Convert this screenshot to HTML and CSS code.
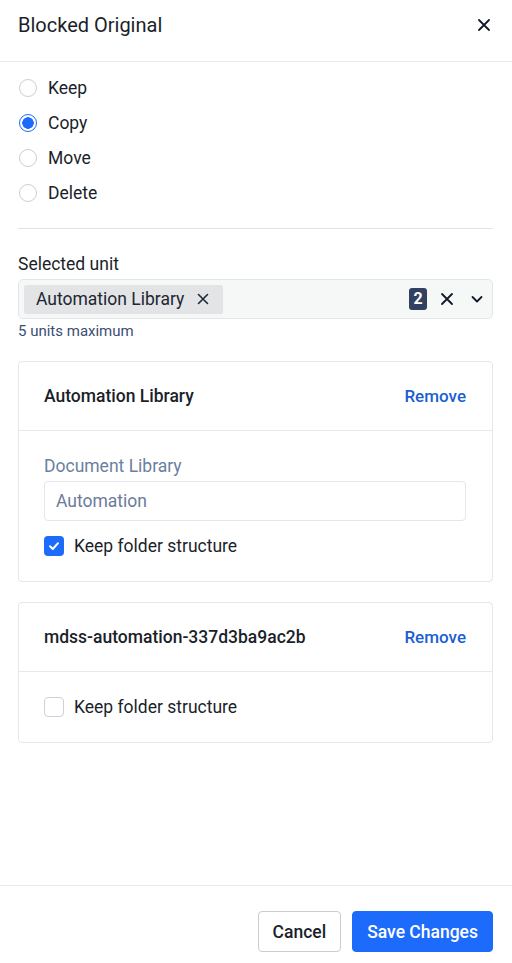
FILE: index.html
```html
<!DOCTYPE html>
<html lang="en">

<head>
  <meta charset="UTF-8" />
  <title>Blocked Original</title>
  <link rel="stylesheet" href="styles.css">
</head>

<body>
  <div class="panel">
    <!-- header -->
    <header class="panel-head">
      <h1>Blocked Original</h1>
      <button class="icon-btn" type="button" aria-label="Close">
        <svg width="14" height="14" viewBox="0 0 14 14"><path d="M2 2L12 12M12 2L2 12" stroke="#111827" stroke-width="1.8" stroke-linecap="round"/></svg>
      </button>
    </header>

    <div class="panel-body">
      <!-- action radios -->
      <ul class="radios">
        <li><span class="radio"></span>Keep</li>
        <li><span class="radio on"></span>Copy</li>
        <li><span class="radio"></span>Move</li>
        <li><span class="radio"></span>Delete</li>
      </ul>

      <hr class="sep">

      <!-- unit select -->
      <label class="field-label">Selected unit</label>
      <div class="select">
        <span class="chip">Automation Library
          <svg width="12" height="12" viewBox="0 0 12 12"><path d="M1.5 1.5L10.5 10.5M10.5 1.5L1.5 10.5" stroke="#1f2937" stroke-width="1.6" stroke-linecap="round"/></svg>
        </span>
        <span class="select-tools">
          <span class="badge">2</span>
          <svg width="14" height="14" viewBox="0 0 14 14"><path d="M2 2L12 12M12 2L2 12" stroke="#111827" stroke-width="1.8" stroke-linecap="round"/></svg>
          <svg class="chev" width="14" height="14" viewBox="0 0 14 14"><path d="M2.5 5L7 9.5L11.5 5" fill="none" stroke="#111827" stroke-width="1.8" stroke-linecap="round" stroke-linejoin="round"/></svg>
        </span>
      </div>
      <p class="hint">5 units maximum</p>

      <!-- unit cards -->
      <section class="card">
        <div class="card-head">
          <h2>Automation Library</h2>
          <a href="#" class="link">Remove</a>
        </div>
        <div class="card-body">
          <label class="sub-label">Document Library</label>
          <input class="input" type="text" placeholder="Automation">
          <div class="check">
            <span class="box on">
              <svg width="12" height="12" viewBox="0 0 12 12"><path d="M2 6.3L4.8 9L10 3.2" fill="none" stroke="#fff" stroke-width="2" stroke-linecap="round" stroke-linejoin="round"/></svg>
            </span>
            Keep folder structure
          </div>
        </div>
      </section>

      <section class="card">
        <div class="card-head">
          <h2>mdss-automation-337d3ba9ac2b</h2>
          <a href="#" class="link">Remove</a>
        </div>
        <div class="card-body">
          <div class="check">
            <span class="box"></span>
            Keep folder structure
          </div>
        </div>
      </section>
    </div>

    <!-- footer buttons -->
    <footer class="panel-foot">
      <button class="btn" type="button">Cancel</button>
      <button class="btn primary" type="button">Save Changes</button>
    </footer>
  </div>
</body>

</html>
```

FILE: styles.css
```css
/* reset */
html,
body,
ul,
h1,
h2,
p {
  margin: 0;
  padding: 0;
}

ul {
  list-style: none;
}

body {
  font-family: Roboto, "Liberation Sans", sans-serif;
  font-size: 17.5px;
  color: #1b1f2a;
  background: #fff;
}

/* panel: header / body / footer column */
.panel {
  display: flex;
  flex-direction: column;
  height: 100vh;
}

.panel-head {
  display: flex;
  justify-content: space-between;
  align-items: flex-start;
  height: 62px;
  padding: 13px 21px 0 18px;
  box-sizing: border-box;
  border-bottom: 1px solid #e8e8e8;
}

.panel-head h1 {
  font-size: 20px;
  font-weight: 400;
  line-height: 24px;
}

.icon-btn {
  border: 0;
  background: none;
  padding: 0;
  margin-top: 5px;
  display: flex;
}

.panel-body {
  flex: 1;
  padding: 8px 19px 0 18px;
}

/* radios */
.radios li {
  display: flex;
  align-items: center;
  height: 35px;
  line-height: 24px;
}

.radio {
  width: 18px;
  height: 18px;
  box-sizing: border-box;
  border: 1px solid #c9ced6;
  border-radius: 50%;
  margin: 0 11px 0 1px;
}

.radio.on {
  border: 1.5px solid #1c6bfb;
  background: radial-gradient(circle, #1c6bfb 0 5.5px, #fff 6px);
}

.sep {
  border: 0;
  border-top: 1px solid #e1e3e6;
  margin: 18px 0 23px;
}

/* select */
.field-label {
  display: block;
  line-height: 24px;
  margin-bottom: 3px;
}

.select {
  display: flex;
  justify-content: space-between;
  align-items: center;
  height: 40px;
  box-sizing: border-box;
  padding: 0 8px 0 5px;
  border: 1px solid #e3e6e8;
  border-radius: 5px;
  background: #f6f8f8;
}

.chip {
  display: flex;
  align-items: center;
  gap: 13px;
  height: 29px;
  padding: 0 14px 0 12px;
  background: #e3e4e5;
  border-radius: 2px;
  color: #202633;
}

.select-tools {
  display: flex;
  align-items: center;
}

.badge {
  width: 18px;
  height: 22px;
  border-radius: 3px;
  background: #32415f;
  color: #fff;
  font-size: 16px;
  font-weight: 700;
  text-align: center;
  line-height: 22px;
  margin-right: 13px;
}

.chev {
  margin-left: 16px;
}

.hint {
  font-size: 15px;
  line-height: 20px;
  margin-top: 2px;
  color: #3b4e72;
}

/* cards */
.card {
  border: 1px solid #e4e6e9;
  border-radius: 4px;
  margin-top: 20px;
}

.card-head {
  display: flex;
  justify-content: space-between;
  align-items: center;
  height: 68px;
  padding: 0 26px 0 25px;
  border-bottom: 1px solid #e8e9eb;
}

.card-head h2 {
  font-size: 17.5px;
  font-weight: 500;
}

.link {
  color: #1a5fd3;
  font-size: 17px;
  font-weight: 500;
  text-decoration: none;
}

.card-body {
  padding: 23px 26px 23px 25px;
}

.sub-label {
  display: block;
  line-height: 24px;
  color: #6a7fa2;
  margin-bottom: 3px;
}

.input {
  display: block;
  width: 100%;
  height: 40px;
  box-sizing: border-box;
  border: 1px solid #e4e6e9;
  border-radius: 4px;
  padding: 0 11px;
  font: inherit;
  margin-bottom: 13px;
}

.input::placeholder {
  color: #6b7b9a;
}

.check {
  display: flex;
  align-items: center;
  line-height: 24px;
}

.box {
  display: flex;
  align-items: center;
  justify-content: center;
  width: 20px;
  height: 20px;
  box-sizing: border-box;
  border: 1px solid #cdd2da;
  border-radius: 4px;
  margin-right: 10px;
}

.box.on {
  border: 0;
  background: #1c6bfb;
}

/* footer */
.panel-foot {
  display: flex;
  justify-content: flex-end;
  gap: 11px;
  padding: 25px 19px 11px;
  border-top: 1px solid #e8e8e8;
}

.btn {
  height: 41px;
  padding: 0 14px;
  font: 500 17.5px Roboto, "Liberation Sans", sans-serif;
  color: #1b1f2a;
  background: #fff;
  border: 1px solid #c8ccd3;
  border-radius: 4px;
}

.btn.primary {
  color: #fff;
  background: #1c6bfb;
  border-color: #1c6bfb;
}
```
